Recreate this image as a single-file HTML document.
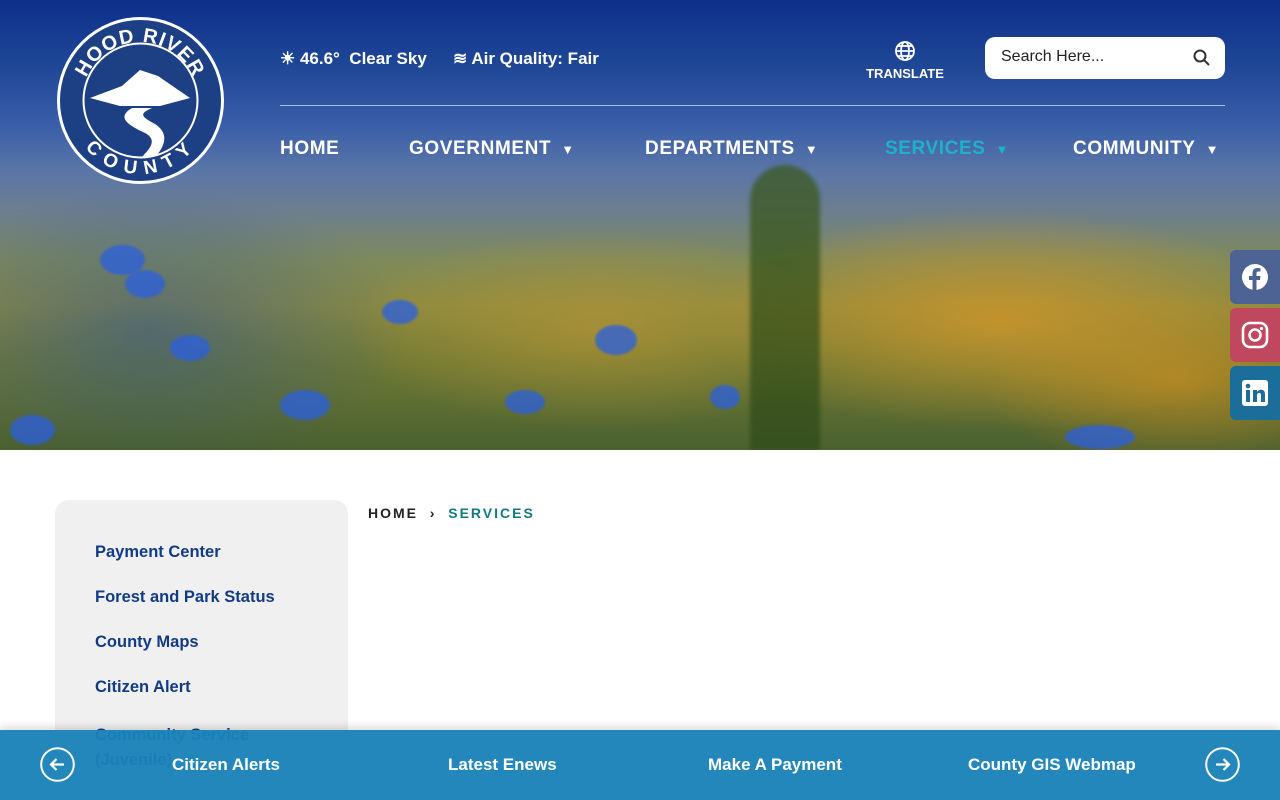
<!DOCTYPE html>
<html><head><meta charset="utf-8"><style>
*{margin:0;padding:0;box-sizing:border-box}
html,body{width:1280px;height:800px;overflow:hidden}
body{font-family:"Liberation Sans",sans-serif;background:#fff;position:relative}
.hero{position:absolute;left:0;top:0;width:1280px;height:450px;overflow:hidden;
background:
radial-gradient(ellipse 300px 110px at 1000px 320px,rgba(210,150,40,.8),transparent),
radial-gradient(ellipse 250px 100px at 600px 330px,rgba(190,150,50,.6),transparent),
radial-gradient(ellipse 200px 90px at 1180px 380px,rgba(200,140,30,.7),transparent),
radial-gradient(ellipse 260px 140px at 150px 330px,rgba(40,80,160,.5),transparent),
linear-gradient(180deg,#0d2f8a 0%,#1e4696 14%,#3a5ea8 28%,#5a76a8 38%,#6f7f8a 48%,#7f8a5a 58%,#8a8a40 68%,#6f7a35 80%,#4a6030 100%);}
.fl{position:absolute;border-radius:50%;background:#2b5fe0;opacity:.75;filter:blur(1px)}
.logo{position:absolute;left:57px;top:17px;width:167px;height:167px;border-radius:50%;background:#1d3f84;border:3px solid #fff}
.logo svg{position:absolute;left:0;top:0}
.top{position:absolute;color:#fff;font-weight:bold;font-size:17px}
.rule{position:absolute;left:280px;top:105px;width:945px;height:1px;background:rgba(200,215,255,.8)}
.nav{position:absolute;top:138px;color:#fff;font-weight:bold;font-size:19px;letter-spacing:.6px}
.nav small{font-size:13px;margin-left:10px}
.search{position:absolute;left:985px;top:37px;width:240px;height:42px;background:#fff;border-radius:10px;font-size:16px;color:#222;padding:11px 16px}
.soc{position:absolute;left:1230px;width:50px;height:54px;border-radius:6px 0 0 6px}
.soc svg{position:absolute;left:11px;top:13px}
.side{position:absolute;left:55px;top:500px;width:293px;height:300px;background:#f0f0f0;border-radius:14px 14px 0 0}
.side a{position:absolute;left:40px;color:#113b88;font-weight:bold;font-size:16.5px;text-decoration:none}
.bc{position:absolute;top:505px;font-size:14px;font-weight:bold;letter-spacing:2px}
.bar{position:absolute;left:0;top:730px;width:1280px;height:70px;background:rgba(26,130,184,.96);box-shadow:0 -3px 8px rgba(0,0,0,.15)}
.bar span{position:absolute;top:25px;color:#fff;font-weight:bold;font-size:17px}
.circ{position:absolute;top:17px}
</style></head><body>
<div class="hero">
<div class="fl" style="left:100px;top:245px;width:45px;height:30px"></div>
<div class="fl" style="left:125px;top:270px;width:40px;height:28px"></div>
<div class="fl" style="left:170px;top:335px;width:40px;height:26px"></div>
<div class="fl" style="left:382px;top:300px;width:36px;height:24px"></div>
<div class="fl" style="left:280px;top:390px;width:50px;height:30px"></div>
<div class="fl" style="left:505px;top:390px;width:40px;height:24px"></div>
<div class="fl" style="left:595px;top:325px;width:42px;height:30px"></div>
<div class="fl" style="left:1065px;top:425px;width:70px;height:24px"></div>
<div class="fl" style="left:10px;top:415px;width:45px;height:30px"></div>
<div class="fl" style="left:710px;top:385px;width:30px;height:24px"></div>
<div style="position:absolute;left:750px;top:165px;width:70px;height:285px;background:linear-gradient(#3d5a20,#2f4a18);border-radius:35px 35px 0 0;opacity:.75;filter:blur(2px)"></div>
</div>
<div class="logo">
<svg width="161" height="161" viewBox="0 0 161 161">
<defs><path id="tp" d="M22 80 A58 58 0 0 1 138 80"/><path id="bp" d="M24 84 A56 56 0 0 0 136 84"/></defs>
<circle cx="80.5" cy="80.5" r="57" fill="none" stroke="#fff" stroke-width="2"/>
<path d="M30 78 L62 66 L80 50 L98 56 L130 78 L100 86 L60 86Z" fill="#fff"/>
<path d="M72 88 C55 98 70 106 85 113 C100 121 86 132 82 137 L97 135 C104 126 110 114 95 104 C82 97 78 94 92 88Z" fill="#fff"/>
<text fill="#fff" font-size="20" font-weight="bold" font-family="Liberation Sans" letter-spacing="1"><textPath href="#tp" startOffset="50%" text-anchor="middle">HOOD RIVER</textPath></text>
<text fill="#fff" font-size="19" font-weight="bold" font-family="Liberation Sans" letter-spacing="4" dy="14"><textPath href="#bp" startOffset="50%" text-anchor="middle">COUNTY</textPath></text>
</svg></div>
<div class="top" style="left:280px;top:49px">☀ 46.6°&nbsp; Clear Sky</div>
<div class="top" style="left:453px;top:49px">≋ Air Quality: Fair</div>
<div class="top" style="left:864px;top:40px;font-size:13px;text-align:center;width:82px">
<svg width="22" height="22" viewBox="0 0 22 22" style="display:block;margin:0 auto 4px"><g fill="none" stroke="#fff" stroke-width="1.8"><circle cx="11" cy="11" r="9"/><ellipse cx="11" cy="11" rx="4" ry="9"/><path d="M2 11h18M4 6h14M4 16h14"/></g></svg>TRANSLATE</div>
<div class="search">Search Here...<svg style="position:absolute;right:15px;top:12px" width="17" height="17" viewBox="0 0 17 17"><circle cx="7" cy="7" r="5.5" fill="none" stroke="#333" stroke-width="2"/><path d="M11 11l5 5" stroke="#333" stroke-width="2"/></svg></div>
<div class="rule"></div>
<div class="nav" style="left:280px">HOME</div>
<div class="nav" style="left:409px">GOVERNMENT<small>▼</small></div>
<div class="nav" style="left:645px">DEPARTMENTS<small>▼</small></div>
<div class="nav" style="left:885px;color:#1eb2c8">SERVICES<small>▼</small></div>
<div class="nav" style="left:1073px">COMMUNITY<small>▼</small></div>
<div class="soc" style="top:250px;background:#4d6393"><svg width="28" height="28" viewBox="0 0 28 28"><circle cx="14" cy="14" r="13" fill="#fff"/><path d="M15.5 28V17h3.5l.5-4h-4v-2.5c0-1.2.4-2 2-2h2V5.2c-.4 0-1.6-.2-3-.2-3 0-5 1.8-5 5.1V13H8v4h3.5v11z" fill="#4d6393"/></svg></div>
<div class="soc" style="top:308px;background:#c0485e"><svg width="28" height="28" viewBox="0 0 28 28"><rect x="2" y="2" width="24" height="24" rx="7" fill="none" stroke="#fff" stroke-width="2.6"/><circle cx="14" cy="14" r="5.5" fill="none" stroke="#fff" stroke-width="2.6"/><circle cx="20.5" cy="7.5" r="1.6" fill="#fff"/></svg></div>
<div class="soc" style="top:366px;background:#1c6e9a"><svg width="28" height="28" viewBox="0 0 28 28"><rect x="1" y="1" width="26" height="26" rx="3" fill="#fff"/><rect x="5" y="11" width="4" height="12" fill="#1c6e9a"/><circle cx="7" cy="7" r="2.3" fill="#1c6e9a"/><path d="M12 11h4v2c1-1.5 2.5-2.3 4.2-2.3 2.8 0 3.8 1.8 3.8 5V23h-4v-6.5c0-1.7-.5-2.6-1.9-2.6S16 15 16 16.6V23h-4z" fill="#1c6e9a"/></svg></div>
<div class="side">
<a style="top:43px">Payment Center</a>
<a style="top:88px">Forest and Park Status</a>
<a style="top:133px">County Maps</a>
<a style="top:178px">Citizen Alert</a>
<a style="top:223px;line-height:25px">Community Service<br>(Juvenile)</a>
</div>
<div class="bc" style="left:368px;color:#222">HOME &nbsp;›&nbsp; <span style="color:#137a80">SERVICES</span></div>
<div class="bar">
<svg class="circ" style="left:40px" width="35" height="35" viewBox="0 0 35 35"><circle cx="17.5" cy="17.5" r="16.3" fill="none" stroke="#fff" stroke-width="2"/><path d="M24 17.5H11M16.5 12l-5.5 5.5 5.5 5.5" fill="none" stroke="#fff" stroke-width="2.2"/></svg>
<span style="left:172px">Citizen Alerts</span>
<span style="left:448px">Latest Enews</span>
<span style="left:708px">Make A Payment</span>
<span style="left:968px">County GIS Webmap</span>
<svg class="circ" style="left:1205px" width="35" height="35" viewBox="0 0 35 35"><circle cx="17.5" cy="17.5" r="16.3" fill="none" stroke="#fff" stroke-width="2"/><path d="M11 17.5h13M18.5 12l5.5 5.5-5.5 5.5" fill="none" stroke="#fff" stroke-width="2.2"/></svg>
</div>
</body></html>
